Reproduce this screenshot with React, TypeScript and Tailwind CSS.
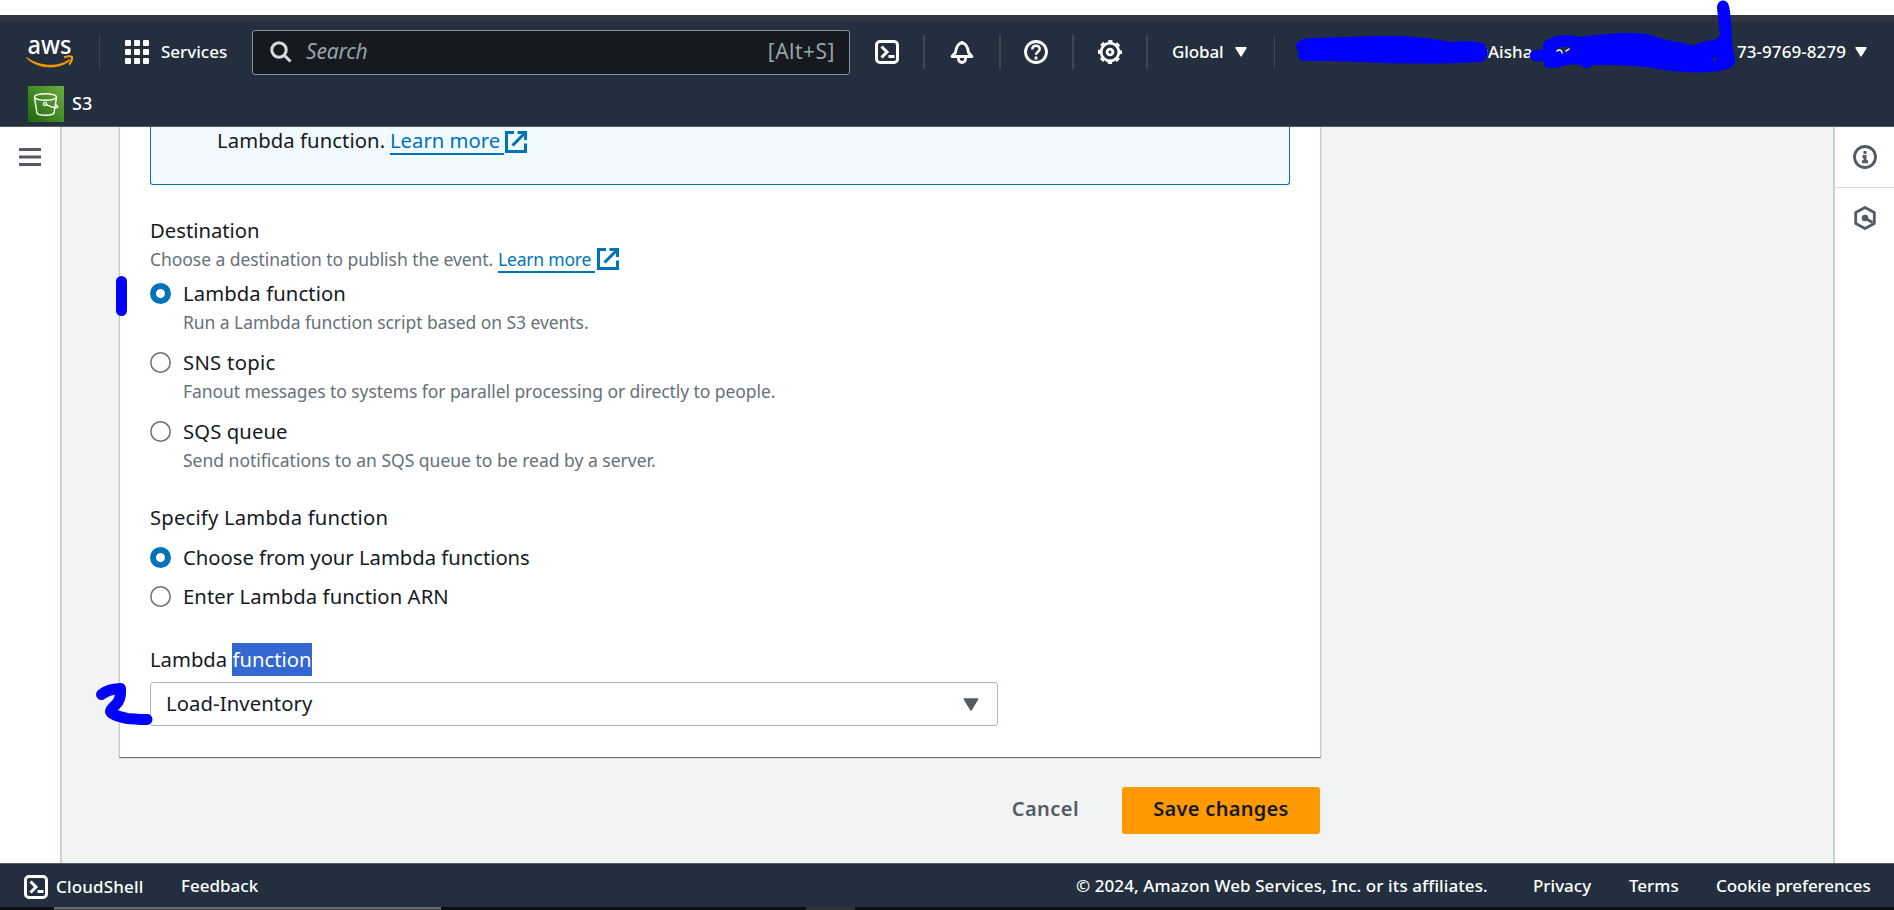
import React from "react";

const Ext = () => (
  <svg width="22" height="22" viewBox="0 0 22 22" fill="none" stroke="#0073bb" strokeWidth="3">
    <path d="M9 1.5H1.5V20.5H20.5V12.5" />
    <path d="M12.5 1.5H20.5V9" />
    <path d="M7.5 14.5L20 2" />
  </svg>
);

const Shell = () => (
  <svg width="24" height="24" viewBox="0 0 24 24" fill="none" stroke="#fff" strokeWidth="3" className="shrink-0">
    <rect x="1.5" y="1.5" width="21" height="21" rx="3.5" />
    <path d="M6.5 6.5L12 12L6.5 17.5" />
    <path d="M13.5 16.5H19.5" />
  </svg>
);

const Caret = ({ fill, w, h }: { fill: string; w: number; h: number }) => (
  <svg width={w} height={h} viewBox="0 0 12 10" className="shrink-0">
    <path d="M1 .8H11L6 9Z" fill={fill} stroke={fill} strokeWidth="1.4" strokeLinejoin="round" />
  </svg>
);

const Radio = ({ on }: { on?: boolean }) =>
  on ? (
    <span className="h-[21px] w-[21px] shrink-0 rounded-full border-[6px] border-[#0073bb] bg-white" />
  ) : (
    <svg width="21" height="21" viewBox="0 0 21 21" className="shrink-0">
      <circle cx="10.5" cy="10.5" r="9.7" fill="#fff" stroke="#687078" strokeWidth="1.5" />
    </svg>
  );

const Option = ({ label, desc, on }: { label: React.ReactNode; desc?: React.ReactNode; on?: boolean }) => (
  <div>
    <div className="flex h-[33px] items-center gap-[12px]">
      <Radio on={on} />
      {label}
    </div>
    {desc && <div className="h-[24px] pl-[33px] text-[17.5px] leading-[24px] tracking-[-0.03px] text-[#687078]">{desc}</div>}
  </div>
);

const Sep = ({ className }: { className: string }) => <span className={"h-[34px] shrink-0 bg-[#414750] " + className} />;

export default function App() {
  return (
    <div className="relative flex h-[910px] w-[1894px] flex-col overflow-hidden bg-white pt-[15px] font-['Noto_Sans','Open_Sans',sans-serif] whitespace-nowrap text-[#16191f]">
      <header className="h-[112px] shrink-0 border-b border-[#545b64] bg-[#232f3e] text-[17px] font-medium text-white">
        <div className="h-[7px] bg-[#323643]" />
        <div className="flex h-[60px] items-center pl-[26px]">
          <svg width="48" height="40" viewBox="0 -10 48 40" className="-mt-[9px] shrink-0">
            <text x="1.5" y="15.5" fontSize="25" fill="#fff" textLength="44" lengthAdjust="spacingAndGlyphs" fontFamily="Noto Sans" fontWeight="500">aws</text>
            <path d="M.5 19.5C14 29 32 30 43.5 21.5L44 22.5C32 32 12 31 .5 20Z" fill="#ff9900" stroke="#ff9900" strokeWidth=".8" />
            <path d="M38 19.5C41 18 45 18 46 19C46.500 21 45 25 43 26.500" fill="none" stroke="#ff9900" strokeWidth="2" />
          </svg>
          <Sep className="ml-[25px] w-px" />
          <svg width="24" height="24" viewBox="0 0 24 24" fill="#fff" className="ml-[25px] shrink-0">
            {[0, 9, 18].map((y) => [0, 9, 18].map((x) => <rect key={`${x}-${y}`} x={x} y={y} width="6" height="6" rx="1" />))}
          </svg>
          <span className="ml-[12px] w-[66px]">Services</span>
          <div className="ml-[25px] flex h-[45px] w-[598px] shrink-0 items-center rounded-[3px] border border-[#879596] bg-[#16191f] pr-[14px] pl-[17px] text-[21px] font-normal text-[#95a5a6]">
            <svg width="22" height="22" viewBox="0 0 22 22" fill="none" stroke="#d5dbdb" strokeWidth="3">
              <circle cx="9" cy="9" r="7.200" />
              <path d="M14.500 14.500L20.500 20.500" />
            </svg>
            <span className="ml-[14px] italic tracking-[-0.2px]">Search</span>
            <span className="ml-auto tracking-[0.5px]">[Alt+S]</span>
          </div>
          <div className="ml-[25px] flex"><Shell /></div>
          <Sep className="ml-[24px] w-[2px]" />
          <svg width="24" height="24" viewBox="0 0 24 24" fill="none" stroke="#fff" strokeWidth="2.800" strokeLinejoin="round" className="ml-[25px] shrink-0">
            <path d="M12 1V3M2 16.500H22L18.500 12.500C17.500 6 15 3 12 3C9 3 6.500 6 5.500 12.500Z" />
            <path d="M8.500 17V19C8.500 21 10 22.500 12 22.500C14 22.500 15.500 21 15.500 19V17" />
          </svg>
          <Sep className="ml-[25px] w-[2px]" />
          <svg width="24" height="24" viewBox="0 0 24 24" fill="none" stroke="#fff" strokeWidth="2.800" className="ml-[23px] shrink-0">
            <circle cx="12" cy="12" r="10.500" />
            <path d="M8.300 9.500C8.300 7 9.800 5.700 12 5.700C14.200 5.700 15.700 7 15.700 9C15.700 11.800 12 11.700 12 14.800" strokeWidth="2.500" />
            <path d="M12 16.500V19.500" />
          </svg>
          <Sep className="ml-[24px] w-[2px]" />
          <svg width="24" height="24" viewBox="0 0 24 24" fill="none" stroke="#fff" className="ml-[24px] shrink-0">
            <circle cx="12" cy="12" r="8.900" strokeWidth="2.700" />
            <circle cx="12" cy="12" r="10.900" strokeWidth="2.200" strokeDasharray="4.280 4.280" strokeDashoffset="2.140" />
            <circle cx="12" cy="12" r="2.900" strokeWidth="2.800" />
          </svg>
          <Sep className="ml-[24px] w-[2px]" />
          <span className="ml-[24px] w-[54px] tracking-[-0.1px]">Global</span>
          <div className="ml-[9px] flex"><Caret fill="#fff" w={12} h={10} /></div>
          <Sep className="ml-[27px] w-px" />
          <span className="ml-[202px]">#Aisha</span>
          <span className="mr-[9px] ml-auto tracking-[0.08px]">73-9769-8279</span>
          <div className="mr-[27px] flex"><Caret fill="#fff" w={12} h={10} /></div>
        </div>
        <div className="flex h-[44px] items-start gap-[8px] pt-[4px] pl-[28px]">
          <svg width="36" height="36" viewBox="0 0 36 36">
            <defs>
              <linearGradient id="s3" x1="0" y1="1" x2="1" y2="0"><stop stopColor="#1b660f" /><stop offset="1" stopColor="#6cae3e" /></linearGradient>
            </defs>
            <rect width="36" height="36" fill="url(#s3)" />
            <g fill="none" stroke="#fff" strokeWidth="1.400">
              <ellipse cx="17.500" cy="11" rx="11" ry="3.300" />
              <path d="M6.500 11.500L9 27C10 30 25 30 26 27L28.500 11.500" />
              <circle cx="17" cy="18" r="1.600" />
              <path d="M18.500 18.600C22 20.500 27 22 29.500 21.500C30.500 20.500 28 18.800 27 18.500" />
            </g>
          </svg>
          <span className="text-[18px] leading-[35px]">S3</span>
        </div>
      </header>

      <div className="flex min-h-0 flex-1 overflow-hidden bg-[#f2f3f3]">
        <aside className="w-[62px] shrink-0 border-r-2 border-[#c8d0d1] bg-white pt-[21px] pl-[19px]">
          <svg width="22" height="18" viewBox="0 0 22 18" stroke="#545b64" strokeWidth="3"><path d="M0 1.500H22M0 9H22M0 16.500H22" /></svg>
        </aside>

        <main className="ml-[57px] w-[1202px] shrink-0">
          <section className="flex h-[630px] flex-col rounded-b-[1px] border-x border-[#c3cbcc] bg-white pr-[30px] pl-[30px] text-[20.25px] leading-[33px] shadow-[0_1px_1px_0_#545b64]">
            <div className="flex h-[58px] shrink-0 items-start rounded-b-[3px] border border-t-0 border-[#0073bb] bg-[#f1faff] pl-[66px]">
              <span className="h-[28px] w-[167px] leading-[26px] tracking-[0.08px]">Lambda function.</span>
              <span className="ml-[6px] h-[28px] w-[114px] border-b-2 border-[#0073bb] leading-[26px] text-[#0073bb]">Learn more</span>
              <span className="mt-[4px] ml-px"><Ext /></span>
            </div>

            <div className="mt-[29px]">Destination</div>
            <div className="flex h-[26px] text-[17.5px] leading-[24px] tracking-[-0.06px] text-[#687078]">
              <span className="w-[343px]">Choose a destination to publish the event.</span>
              <span className="ml-[5px] h-[26px] w-[97px] border-b-2 border-[#0073bb] tracking-[-0.2px] text-[#0073bb]">Learn more</span>
              <span className="mt-px ml-[2px]"><Ext /></span>
            </div>
            <div className="mt-[4px] flex flex-col gap-[12px]">
              <Option on label={<span className="tracking-[0.1px]">Lambda function</span>} desc={<span className="tracking-[-0.06px]">Run a Lambda function script based on S3 events.</span>} />
              <Option label={<span className="tracking-[0.3px]">SNS topic</span>} desc={<span className="tracking-[-0.08px]">Fanout messages to systems for parallel processing or directly to people.</span>} />
              <Option label={<span className="tracking-[0.1px]">SQS queue</span>} desc={<span className="tracking-[0px]">Send notifications to an SQS queue to be read by a server.</span>} />
            </div>

            <div className="mt-[29px] tracking-[0.18px]">Specify Lambda function</div>
            <div className="mt-[7px] flex flex-col gap-[6px]">
              <Option on label={<span className="tracking-[-0.02px]">Choose from your Lambda functions</span>} />
              <Option label={<span className="tracking-[0.08px]">Enter Lambda function ARN</span>} />
            </div>

            <div className="mt-[30px] flex">
              Lambda&nbsp;<span className="w-[80px] bg-[#3367d1] text-white">function</span>
            </div>
            <div className="mt-[6px] flex h-[44px] w-[848px] shrink-0 items-center justify-between rounded-[3px] border border-[#aab7b8] pr-[18px] pl-[15px]">
              <span className="pb-[2px] tracking-[0.1px]">Load-Inventory</span>
              <Caret fill="#545b64" w={16} h={13} />
            </div>
          </section>
          <div className="mt-[30px] flex h-[47px] items-center justify-end pr-px text-[20px] font-semibold tracking-[0.3px]">
            <span className="mr-[43px] pb-[3px] tracking-[0.45px] text-[#545b64]">Cancel</span>
            <button className="h-[47px] w-[198px] rounded-[3px] bg-[#ff9900] pb-[3px]">Save changes</button>
          </div>
        </main>

        <aside className="ml-auto w-[61px] border-l-2 border-[#c8d0d1] bg-white">
          <div className="flex h-[61px] items-center justify-center border-b border-[#d5dbdb]">
            <svg width="24" height="24" viewBox="0 0 24 24" fill="none" stroke="#545b64" strokeWidth="3">
              <circle cx="12" cy="12" r="10.500" strokeWidth="2.800" />
              <path d="M12 6V9M9.500 11.500H12V17M9 16.700H15" />
            </svg>
          </div>
          <div className="flex h-[60px] items-center justify-center">
            <svg width="24" height="24" viewBox="0 0 24 24" fill="none" stroke="#545b64" strokeWidth="2.800">
              <path d="M12 1.500L21.300 6.500V17.500L12 22.500L2.700 17.500V6.500Z" strokeLinejoin="round" />
              <circle cx="12" cy="12" r="3.300" fill="#545b64" stroke="none" />
              <path d="M12 12L19.500 16.500" />
            </svg>
          </div>
        </aside>
      </div>

      <footer className="flex h-[44px] shrink-0 items-center border-t border-[#545b64] bg-[#232f3e] pr-[23px] pl-[24px] text-[17px] font-medium text-white">
        <div className="mt-[3px] flex"><Shell /></div>
        <span className="mt-[2px] ml-[8px] w-[88px] tracking-[0.15px]">CloudShell</span>
        <span className="ml-[37px]">Feedback</span>
        <span className="ml-auto w-[412px] tracking-[0.09px]">© 2024, Amazon Web Services, Inc. or its affiliates.</span>
        <span className="ml-[45px] w-[59px]">Privacy</span>
        <span className="ml-[37px] w-[50px]">Terms</span>
        <span className="ml-[37px] w-[155px] tracking-[-0.1px]">Cookie preferences</span>
      </footer>
      <div className="flex h-[3px] shrink-0 bg-[#100f10]">
        <div className="ml-[54px] w-[387px] border-t-2 border-[#6b6868] bg-[#454141]" />
        <div className="ml-[365px] w-[49px] bg-[#343334]" />
      </div>

      <svg className="pointer-events-none absolute inset-0" width="1894" height="910" viewBox="0 0 1894 910" fill="none" stroke="#0000ff" strokeLinecap="round" strokeLinejoin="round">
        <path fill="#00f" stroke="none" d="M1296 47C1296 41 1303 38 1312 38C1350 37 1400 34 1425 38C1437 39 1445 41 1450 42C1466 41 1482 40 1486 46C1489 53 1487 61 1481 62C1440 64 1400 64 1360 62C1340 61 1320 61 1304 61C1299 61 1297 57 1299 53C1297 51 1296 49 1296 47Z" />
        <path fill="#00f" stroke="none" fillRule="evenodd" d="M1529.500 55.500C1530 50 1537 49 1543 50C1542 42 1545 40 1550 39C1556 34 1572 34 1578 37C1605 34 1635 31 1650 35C1660 37 1662 40 1672 41C1682 42 1688 44 1690 45C1700 45 1700 41 1706 41C1713 41 1719 38 1720 35L1717 8C1717 -1 1727 -2 1729 6C1732 20 1731 35 1733 50C1737 62 1735 65 1730 68C1715 74 1690 73 1663 70C1640 65 1620 65 1592 65C1590 69 1584 70 1581 65C1572 63 1565 65 1560 67C1554 69 1547 68 1544 66C1543 64 1544 62 1543 61C1536 62 1530 61 1529.500 55.500ZM1555 51C1559 46 1567 46 1572 48L1565 53C1562 49 1559 50 1555 51ZM1713 57L1718 60L1713 61Z" />
        <path d="M1557 51C1559 49 1562 50 1562 53M1566 51L1569 49" stroke="#fff" strokeWidth="1.500" />
        <path strokeWidth="11" d="M121.500 281.500V310.500" />
        <path strokeWidth="11" d="M101.500 694.500C107 690 112 689 120.500 688.500C121 694 120.500 698 118 702C115 706 111 708 110.500 711.500C112 715 121 717 127 718.500C133 718.500 140 720 147 719.500" />
      </svg>
    </div>
  );
}
